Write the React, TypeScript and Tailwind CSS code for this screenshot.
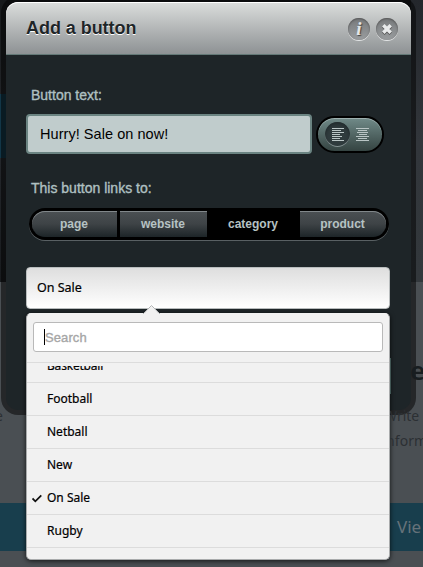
import React from 'react';

const categories = [
  { name: 'Football', selected: false },
  { name: 'Netball', selected: false },
  { name: 'New', selected: false },
  { name: 'On Sale', selected: true },
  { name: 'Rugby', selected: false },
];

function Backdrop() {
  return (
    <div className="absolute inset-0 overflow-hidden bg-[#4a4f53] font-['Noto_Sans',sans-serif] text-[#2c3034]">
      <div className="h-[282px] bg-linear-to-b from-[#17191b] via-[#25282c] to-[#181b1e]" />
      <div className="absolute right-0 top-0 h-[282px] w-3 bg-linear-to-b from-[#24272c] via-[#32363b] to-[#33383c]" />
      <div className="absolute left-0 top-[94px] h-[64px] w-2 bg-[#123647]" />
      <div className="absolute left-0 top-[503px] h-12 w-full bg-[#183e4d]" />
      <span className="absolute left-[-5px] top-[406px] text-[14px] leading-5">e</span>
    </div>
  );
}

function BackdropText() {
  return (
    <div className="pointer-events-none absolute bottom-0 right-0 top-0 w-[33px] overflow-hidden font-['Noto_Sans',sans-serif] text-[#2c3034]">
      <div className="absolute left-0 top-[358px] h-9 w-px bg-[#405553]" />
      <span className="absolute left-[20px] top-[354px] text-[26px] font-semibold leading-8 text-[#181d20]">e</span>
      <span className="absolute left-[-6px] top-[406px] text-[14px] leading-5">Write</span>
      <span className="absolute left-[-4px] top-[431px] whitespace-nowrap text-[14px] leading-5 tracking-[0.1px]">nform</span>
      <span className="absolute left-[7px] top-[515px] text-[17px] leading-6 text-[#66727a]">Vie</span>
    </div>
  );
}

function HeaderButton({ children, label }: { children: React.ReactNode; label: string }) {
  return (
    <button
      aria-label={label}
      className="flex size-[22px] items-center justify-center rounded-full bg-linear-to-b from-[#777a7c] to-[#9a9d9f] shadow-[inset_0_1px_2px_#555,0_1px_0_#e3e5e6]"
    >
      {children}
    </button>
  );
}

function AlignIcon({ centered }: { centered: boolean }) {
  const widths = centered ? [13, 9, 11, 8, 13, 9, 13] : [12, 9, 12, 8, 10, 8, 12];
  return (
    <svg width="14" height="14" viewBox="0 0 14 14" className="fill-[#b9c5c5]">
      {widths.map((w, i) => (
        <rect key={i} x={centered ? Math.floor((14 - w) / 2) : 1} y={i * 2} width={w} height="1" />
      ))}
    </svg>
  );
}

function Dropdown() {
  return (
    <div className="absolute left-0 top-[46px] h-[247px] w-full rounded-[5px] border border-[#a9abac] border-t-[#f1f1f1] bg-[#f1f1f1] shadow-[0_1px_5px_rgba(0,0,0,0.75)]">
      <svg className="absolute left-[115px] top-[-10px]" width="20" height="11" viewBox="0 0 20 11">
        <path d="M1 10.5 L9.5 1.5 L18 10.5 V11 H1Z" fill="#f1f1f1" />
        <path d="M1 10 L9.5 1.5 L18 10" fill="none" stroke="#b4b6b7" />
      </svg>
      <div className="px-[6px] pt-2">
        <div className="flex h-[30px] items-center rounded-[3px] border border-[#b9b9b9] bg-white pl-[10px] pt-px font-['Liberation_Sans',Arial,sans-serif] text-[13px] tracking-[0.1px] text-[#a6a6a6] [-webkit-text-stroke:0.35px_#a6a6a6]">
          <span className="-mt-px h-4 w-px bg-black" />
          Search
        </div>
      </div>
      <div className="mt-[10px] h-[197px] font-['Noto_Sans',sans-serif] text-[12px] text-black [-webkit-text-stroke:0.2px_black]">
        <div className="h-[21px] overflow-hidden border-b border-t border-[#dcdcdc] pt-[3px]">
          <div className="h-4 overflow-hidden pl-5">
            <div className="-mt-2 leading-4 tracking-[-0.2px]">Basketball</div>
          </div>
        </div>
        {categories.map((item) => (
          <div key={item.name} className="flex h-[33px] items-center border-b border-[#dcdcdc]">
            <span className="flex w-5 pl-[5px]">
              {item.selected && (
                <svg width="10" height="9" viewBox="0 0 10 9" fill="none">
                  <path d="M0.5 4.5 L3.3 7.3 L9.3 1.3" stroke="#111" strokeWidth="1.8" />
                </svg>
              )}
            </span>
            <span>{item.name}</span>
          </div>
        ))}
      </div>
    </div>
  );
}

export default function App() {
  return (
    <main className="relative h-[567px] w-[423px] overflow-hidden font-['Liberation_Sans',Arial,sans-serif]">
      <Backdrop />
      <div className="relative ml-px -mt-1 h-[419px] w-[415px] rounded-[17px] bg-black/50 p-[5px] pt-[6px]">
        <section className="h-[408px] w-[405px] rounded-[12px] bg-[#1e2528]">
          <header className="flex h-[53px] items-center rounded-t-[12px] border-b border-[#647977] bg-linear-to-b from-[#dcdedd] to-[#8e9294] pl-5 pr-[13px] shadow-[inset_0_1px_0_white]">
            <h1 className="flex-1 pt-px text-[18px] font-bold tracking-[-0.05px] text-[#1e2528] [text-shadow:0_1px_0_#fff]">Add a button</h1>
            <div className="flex gap-[6px] pt-px">
              <HeaderButton label="Information">
                <span className="font-['Liberation_Serif',serif] text-[19px] font-bold italic leading-none text-[#e4e6e7] [text-shadow:1px_1px_1px_#444]">i</span>
              </HeaderButton>
              <HeaderButton label="Close">
                <svg width="12" height="12" viewBox="0 0 12 12">
                  <path d="M2.3 3.3 L9.7 10.7 M9.7 3.3 L2.3 10.7" stroke="#555" strokeWidth="3.6" />
                  <path d="M2.3 2.3 L9.7 9.7 M9.7 2.3 L2.3 9.7" stroke="#e8eaeb" strokeWidth="3.4" />
                </svg>
              </HeaderButton>
            </div>
          </header>

          <div className="px-5 pt-[30px] text-[14px]">
            <div className="pl-[5px] leading-5 text-[#afc0c1] [-webkit-text-stroke:0.35px_#afc0c1]">Button text:</div>
            <div className="mt-[9px] flex items-center gap-[4px]">
              <div className="flex h-10 w-[286px] items-center rounded-[4px] border-2 border-[#6b8482] bg-[#c0cccc] pl-3 pt-px text-[14.5px] tracking-[0.05px] text-black">Hurry! Sale on now!</div>
              <div className="mt-px flex h-[37px] w-[68px] items-center rounded-full border-2 border-black bg-linear-to-b from-[#718b89] to-[#354442] pl-[7px] shadow-[inset_0_1px_0_#9eb0af]">
                <div className="flex size-[25px] items-center justify-center rounded-full bg-[#303c3e] shadow-[inset_0_2px_4px_#202a2c,inset_0_-1px_0_#96a5a5]">
                  <AlignIcon centered={false} />
                </div>
                <div className="ml-[6px]"><AlignIcon centered /></div>
              </div>
            </div>

            <div className="mt-6 pl-[5px] leading-5 text-[#afc0c1] [-webkit-text-stroke:0.35px_#afc0c1]">This button links to:</div>
            <div className="ml-[3px] mt-[10px] flex h-8 w-[360px] rounded-full bg-black p-[3px] text-[12px] font-bold text-[#b6c2c3] shadow-[0_1px_0_#596063]">
              <div className="flex w-[85px] items-center justify-center rounded-l-full bg-linear-to-b from-[#4b5053] via-[#3e4346] to-[#1d2528] pr-px shadow-[inset_0_1px_0_#81878a]">page</div>
              <div className="ml-[3px] flex w-[87px] items-center justify-center bg-linear-to-b from-[#4b5053] via-[#3e4346] to-[#1d2528] pr-px shadow-[inset_0_1px_0_#81878a]">website</div>
              <div className="flex flex-1 items-center justify-center pr-px">category</div>
              <div className="flex w-[86px] items-center justify-center rounded-r-full bg-linear-to-b from-[#4b5053] via-[#3e4346] to-[#1d2528] pr-px shadow-[inset_0_1px_0_#81878a]">product</div>
            </div>

            <div className="relative mt-[27px] h-[42px] w-[364px]">
              <div className="flex h-full items-center rounded-[4px] border border-[#b9bdbe] bg-linear-to-b from-[#dedede] to-white pl-[10px] font-['Noto_Sans',sans-serif] text-[12.5px] text-black [-webkit-text-stroke:0.2px_black]">On Sale</div>
              <Dropdown />
            </div>
          </div>
        </section>
      </div>
      <BackdropText />
    </main>
  );
}
